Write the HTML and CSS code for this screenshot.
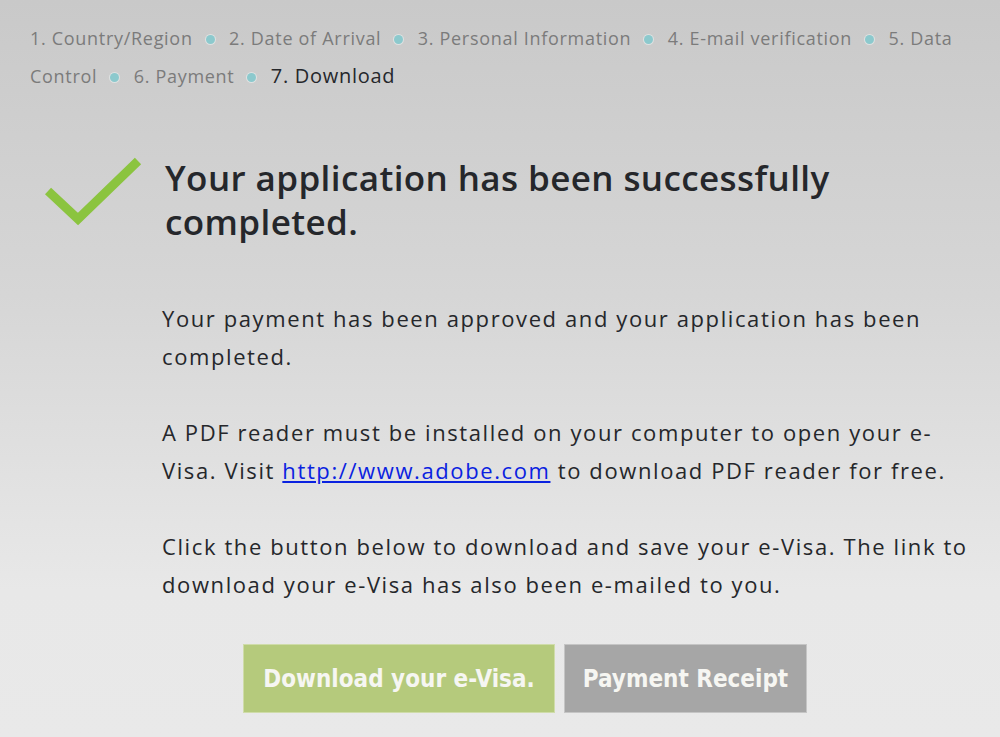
FILE: index.html
```html
<!DOCTYPE html>
<html lang="en">
<head>
  <meta charset="UTF-8" />
  <meta name="viewport" content="width=device-width, initial-scale=1" />
  <title>e-Visa - Download</title>
  <link rel="stylesheet" href="styles.css">
</head>
<body>
  <ol class="steps">
    <li>1. Country/Region</li>
    <li>2. Date of Arrival</li>
    <li>3. Personal Information</li>
    <li>4. E-mail verification</li>
    <li>5. Data Control</li>
    <li>6. Payment</li>
    <li class="current">7. Download</li>
  </ol>

  <div class="content">
    <div class="result">
      <svg class="check" width="100" height="72" viewBox="0 0 100 72">
        <polyline points="3,36 33,64 93,6" fill="none" stroke="#8bc43f" stroke-width="9" />
      </svg>
      <h1>Your application has been successfully completed.</h1>
    </div>

    <div class="text">
      <p>Your payment has been approved and your application has been completed.</p>
      <p>A PDF reader must be installed on your computer to open your e-Visa. Visit <a href="#">http://www.adobe.com</a> to download PDF reader for free.</p>
      <p>Click the button below to download and save your e-Visa. The link to download your e-Visa has also been e-mailed to you.</p>
    </div>

    <div class="buttons">
      <button class="btn btn-green">Download your e-Visa.</button>
      <button class="btn btn-gray">Payment Receipt</button>
    </div>
  </div>
</body>
</html>
```

FILE: styles.css
```css
:root {
  --text-color: #25272b;
  --step-color: #7b7b7b;
  --dot-color: #8cc9cd;
  --green: #b5ca7c;
  --gray: #a6a6a6;
}

body {
  font-family: 'Open Sans', sans-serif;
  margin: 0;
  padding: 0;
  min-height: 737px;
  background: linear-gradient(to bottom, #c9c9c9 0%, #d6d6d6 40%, #e8e8e8 80%, #e9e9e9 100%);
  color: var(--text-color);
}

.steps {
  list-style: none;
  margin: 0;
  padding: 19px 20px 0 30px;
  font-size: 18px;
  line-height: 38px;
  letter-spacing: 0.7px;
  color: var(--step-color);
}

.steps li {
  display: inline;
}

.steps li:not(:last-child)::after {
  content: "";
  display: inline-block;
  width: 9px;
  height: 9px;
  margin: 0 9px 0 13px;
  border-radius: 50%;
  background-color: var(--dot-color);
  box-shadow: 0 0 0 1px rgba(235, 240, 240, 0.6);
  vertical-align: 1px;
}

.steps .current {
  color: var(--text-color);
  font-size: 20px;
}

.content {
  margin-left: 45px;
  padding-top: 61px;
}

.result {
  display: flex;
  align-items: flex-start;
}

.check {
  flex-shrink: 0;
  margin-top: -1px;
}

h1 {
  margin: 0 0 0 20px;
  font-size: 35px;
  line-height: 44px;
  font-weight: 600;
  letter-spacing: 0.4px;
  max-width: 720px;
}

.text {
  padding: 55px 0 0 117px;
  max-width: 813px;
}

p {
  margin: 0 0 38px;
  font-size: 22px;
  line-height: 38px;
  letter-spacing: 1.6px;
}

p:last-child {
  margin-bottom: 0;
}

a {
  color: #0a22e0;
}

.buttons {
  display: flex;
  justify-content: center;
  gap: 9px;
  margin-top: 41px;
  width: 960px;
}

.btn {
  height: 69px;
  padding: 0;
  border: 1px solid rgba(255, 255, 255, 0.35);
  font-family: 'DejaVu Sans Condensed', 'Liberation Sans Narrow', sans-serif;
  font-stretch: condensed;
  font-size: 24px;
  font-weight: bold;
  white-space: nowrap;
  color: #f6f6f2;
  cursor: pointer;
}

.btn-green {
  background-color: var(--green);
  width: 312px;
}

.btn-gray {
  background-color: var(--gray);
  width: 243px;
}
```
